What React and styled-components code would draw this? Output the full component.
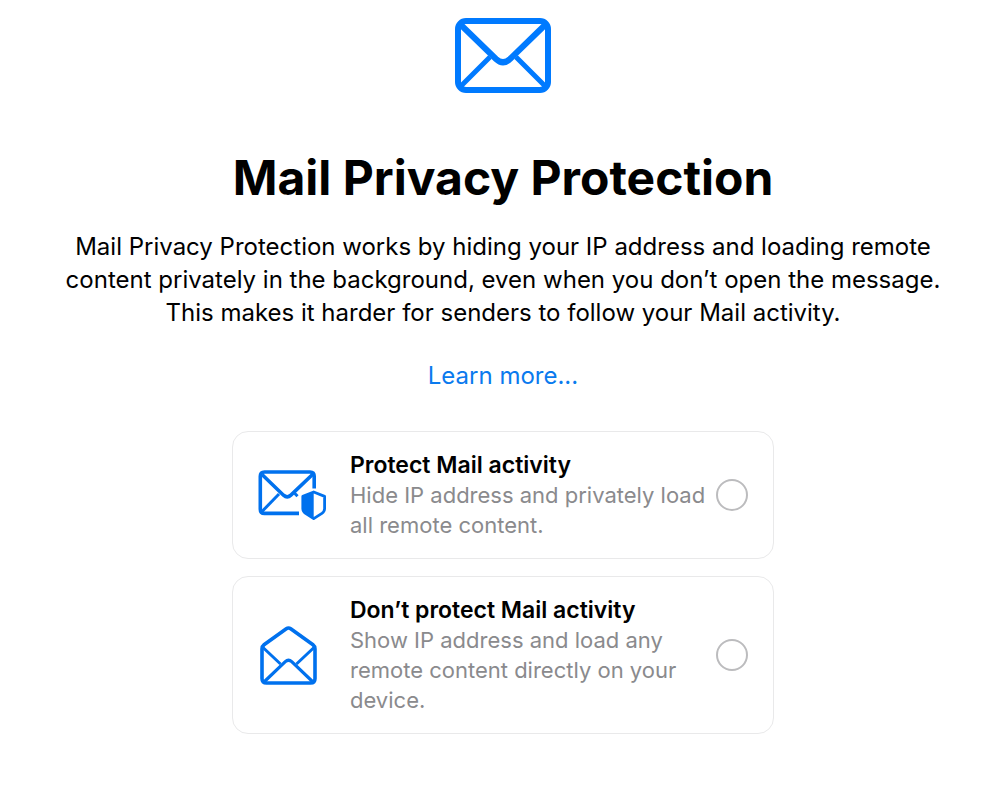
import React, { useState } from 'react';
import styled, { createGlobalStyle } from 'styled-components';

const THEME = {
  bg: '#ffffff',
  accent: '#007aff',
  accentDeep: '#0071ee',
  link: '#0a7aee',
  textMain: '#000000',
  textMuted: '#8a8a8d',
  border: '#e9e9ea',
  radio: '#bcbcbe',
};

const GlobalStyle = createGlobalStyle`
  *, *::before, *::after {
    box-sizing: border-box;
  }

  body {
    margin: 0;
    background: ${THEME.bg};
    color: ${THEME.textMain};
    font-family: Inter, 'Liberation Sans', sans-serif;
  }
`;

const Page = styled.main`
  display: flex;
  flex-direction: column;
  align-items: center;
  padding: 18px 24px 56px 30px;
`;

const HeroIcon = styled.svg`
  width: 96px;
  height: 76px;
  color: ${THEME.accent};
`;

const Title = styled.h1`
  margin: 54px 0 22px;
  font-size: 48px;
  line-height: 60px;
  font-weight: 700;
  text-align: center;
`;

const Intro = styled.p`
  max-width: 900px;
  margin: 0;
  font-size: 24px;
  line-height: 33px;
  text-align: center;
`;

const LearnMore = styled.a`
  margin: 30px 0 39px;
  font-size: 24px;
  line-height: 33px;
  color: ${THEME.link};
  text-decoration: none;

  &:hover {
    text-decoration: underline;
  }
`;

const Options = styled.fieldset`
  display: flex;
  flex-direction: column;
  gap: 17px;
  width: 100%;
  max-width: 542px;
  min-width: 0;
  margin: 0;
  padding: 0;
  border: 0;
`;

const Card = styled.label`
  display: grid;
  grid-template-columns: 68px 1fr 32px;
  align-items: center;
  padding: 18px 25px;
  border: 1px solid ${THEME.border};
  border-radius: 16px;
  cursor: pointer;
`;

const CardIcon = styled.svg`
  width: ${({ $width }) => $width}px;
  height: ${({ $height }) => $height}px;
  margin-left: ${({ $inset }) => $inset || 0}px;
  color: ${THEME.accentDeep};
`;

const CardText = styled.span`
  padding: 0 8px 0 24px;
  font-size: 22px;
  line-height: 30px;
`;

const CardTitle = styled.strong`
  display: block;
  font-size: 23px;
  font-weight: 600;
`;

const CardDetail = styled.span`
  display: block;
  color: ${THEME.textMuted};
`;

const Radio = styled.input`
  appearance: none;
  width: 32px;
  height: 32px;
  margin: 0;
  border: 2px solid ${THEME.radio};
  border-radius: 50%;
  background: ${THEME.bg};
  cursor: pointer;

  &:checked {
    border: 10px solid ${THEME.accent};
  }
`;

const EnvelopeIcon = () => (
  <HeroIcon viewBox="0 0 96 76" fill="none" stroke="currentColor" strokeWidth="6" aria-hidden="true">
    <rect x="3" y="3" width="90" height="69" rx="8" />
    <path d="M6 7 L41 41 Q48 47.5 55 41 L90 7" />
    <path d="M6 68 L35 39 M90 68 L61 39" strokeWidth="5" />
  </HeroIcon>
);

const ShieldedEnvelopeIcon = () => (
  <CardIcon $width={68} $height={50} viewBox="0 0 68 50" fill="none" stroke="currentColor" strokeWidth="3.6" aria-hidden="true">
    <path d="M41 43.4 H6.5 Q2.3 43.4 2.3 39.2 V6.2 Q2.3 2 6.5 2 H52 Q56.2 2 56.2 6.2 V18.5" />
    <path d="M4 4.5 L25.5 25.2 Q29.2 28.6 32.9 25.2 L54.5 4.5" />
    <path d="M4 41.5 L21 24" strokeWidth="3" />
    <path d="M35.5 22 L39.5 26.2" strokeWidth="3" />
    {/* shield, left half filled */}
    <path d="M55.7 22 L44.8 26.4 V38.5 Q44.8 41.5 47.5 43.4 L55.7 48.6 L63.9 43.4 Q66.6 41.5 66.6 38.5 V26.4 Z" strokeWidth="2.8" strokeLinejoin="round" />
    <path d="M55.7 22 L44.8 26.4 V38.5 Q44.8 41.5 47.5 43.4 L55.7 48.6 Z" fill="currentColor" stroke="none" />
  </CardIcon>
);

const OpenEnvelopeIcon = () => (
  <CardIcon $width={57} $height={59} $inset={2} viewBox="0 0 57 59" fill="none" stroke="currentColor" strokeWidth="3.6" aria-hidden="true">
    <path d="M26.3 2.8 Q28.5 1.2 30.7 2.8 L53 18.8 Q55 20.3 55 23 V52.5 Q55 57 50.5 57 H6.5 Q2 57 2 52.5 V23 Q2 20.3 4 18.8 Z" />
    <path d="M3 21.5 L20.5 38 M54 21.5 L36.5 38" strokeWidth="3" />
    <path d="M4 56 L25.3 35.7 Q28.5 32.7 31.7 35.7 L53 56" strokeWidth="3.2" />
  </CardIcon>
);

const OPTIONS = [
  {
    id: 'protect',
    title: 'Protect Mail activity',
    detail: 'Hide IP address and privately load all remote content.',
    icon: <ShieldedEnvelopeIcon />,
  },
  {
    id: 'unprotected',
    title: 'Don’t protect Mail activity',
    detail: 'Show IP address and load any remote content directly on your device.',
    icon: <OpenEnvelopeIcon />,
  },
];

export default function App() {
  const [choice, setChoice] = useState(null);

  return (
    <>
      <GlobalStyle />
      <Page>
        <EnvelopeIcon />
        <Title>Mail Privacy Protection</Title>
        <Intro>
          Mail Privacy Protection works by hiding your IP address and loading remote content
          privately in the background, even when you don’t open the message. This makes it harder
          for senders to follow your Mail activity.
        </Intro>
        <LearnMore href="#learn-more">Learn more...</LearnMore>

        <Options>
          {OPTIONS.map(({ id, title, detail, icon }) => (
            <Card key={id} htmlFor={id}>
              {icon}
              <CardText>
                <CardTitle>{title}</CardTitle>
                <CardDetail>{detail}</CardDetail>
              </CardText>
              <Radio
                type="radio"
                id={id}
                name="mail-privacy"
                value={id}
                checked={choice === id}
                onChange={() => setChoice(id)}
              />
            </Card>
          ))}
        </Options>
      </Page>
    </>
  );
}
